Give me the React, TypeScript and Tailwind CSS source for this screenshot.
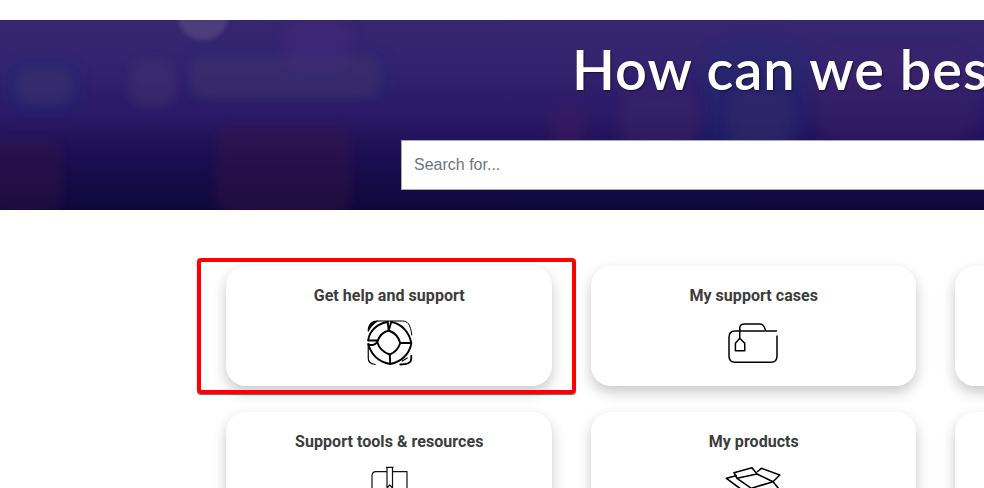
import React from 'react';

const blobs = [
    { x: 178, y: -28, w: 50, h: 48, rx: 24, fill: '#6a5a90', op: 0.45, blur: 2 },
    { x: 8, y: 42, w: 72, h: 50, rx: 16, fill: '#1c2a78', op: 0.4, blur: 6 },
    { x: 16, y: 48, w: 56, h: 36, rx: 14, fill: '#4a3468', op: 0.4, blur: 5 },
    { x: 130, y: 40, w: 46, h: 46, rx: 16, fill: '#47366f', op: 0.4, blur: 5 },
    { x: 186, y: 32, w: 204, h: 50, rx: 18, fill: '#1c2a78', op: 0.25, blur: 6 },
    { x: 190, y: 36, w: 190, h: 42, rx: 16, fill: '#4a3468', op: 0.42, blur: 5 },
    { x: 285, y: 0, w: 65, h: 45, rx: 18, fill: '#552a85', op: 0.35, blur: 7 },
    { x: 215, y: 105, w: 136, h: 90, rx: 18, fill: '#43143f', op: 0.32, blur: 5 },
    { x: -10, y: 118, w: 72, h: 76, rx: 16, fill: '#43143f', op: 0.3, blur: 5 },
    { x: 550, y: 85, w: 36, h: 50, rx: 14, fill: '#551a5c', op: 0.3, blur: 7 },
    { x: 620, y: 70, w: 80, h: 60, rx: 20, fill: '#4a2a68', op: 0.35, blur: 7 },
    { x: 705, y: 25, w: 100, h: 105, rx: 24, fill: '#1c2a70', op: 0.45, blur: 7 },
    { x: 730, y: 70, w: 60, h: 60, rx: 20, fill: '#3f2a68', op: 0.4, blur: 7 },
    { x: 815, y: 30, w: 160, h: 95, rx: 30, fill: '#4a2468', op: 0.3, blur: 7 },
];

const LifeRingIcon = () => (
    <svg viewBox="-1.25 0 60 55" className="h-[55px] w-[60px]" fill="none" stroke="#000" strokeWidth="1.9" strokeLinecap="round" strokeLinejoin="round">
        {/* hole */}
        <path d="M28.500 15.500C34 17.500 38.500 22.500 40 28C38.500 33 34.500 37.500 29.500 39.500C23.500 37.500 18.500 32.500 17 27C18.500 21.500 23 17 28.500 15.500Z" />
        {/* spokes */}
        <path d="M27.500 7Q28 12 28.500 15.500Q29.500 12 31 7M40 28H51M29.500 39.500L30 49M17 25.500L8 25.500" />
        {/* ring */}
        <path d="M8 25C9 16 17 8.500 27.500 7M31 7C41 8.500 49 17 51 28M51 29C49 39 41 47 30 49M30 49C19 47 11 40 8 29C11 31 15 30 17 27" />
        {/* frame corners */}
        <path d="M8 16C8 10 11 6 17 6C13 8.500 10 12 8 16Z" fill="#000" strokeWidth="1.2" />
        <path d="M17 6H42C47 6 50.500 9 51.500 20" strokeWidth="1" />
        <path d="M8 29V43C8 46 10 49 15 49.500" strokeWidth="1.2" />
        <path d="M51 41V44C51 47 48 49.500 40 49.500" strokeWidth="1.8" />
        <path d="M42 46L47 43" strokeWidth="1.2" />
    </svg>
);

const CaseIcon = () => (
    <svg viewBox="0 0 60 55" className="h-[55px] w-[60px]" fill="none" stroke="#000" strokeWidth="1.5" strokeLinecap="round" strokeLinejoin="round">
        <path d="M16.750 15V13C16.750 10.500 18.500 9 21.750 9H37C39.500 9 41.500 11.500 42.400 15" />
        <path d="M53.500 16H12C8 16 6 18.500 6 22.500V41C6 45 8.500 47.300 12 47.300H48C51.500 47.300 54 45 54 41V21" />
        <path d="M16.750 15V23.300L12.400 28.300V35.700H21.750V28.300L16.750 23.300" />
    </svg>
);

const BookIcon = () => (
    <svg viewBox="0 0 60 55" className="h-[55px] w-[60px]" fill="none" stroke="#111" strokeWidth="1.2" strokeLinejoin="round">
        <path d="M28 10.700H17C14.500 10.700 13 12.500 13 15V55M33.500 10.700H48V55" />
        <path d="M27 6.300H34.500M28 6.300V27L30.700 24L33.500 27V6.300" />
    </svg>
);

const BoxIcon = () => (
    <svg viewBox="0 0 60 55" className="h-[55px] w-[60px]" fill="none" stroke="#000" strokeWidth="1.6" strokeLinejoin="round">
        <path d="M11 11.700L29 6.700L34 13L14 17.300ZM34 11L38.400 7.300L56.750 14L50 20.700L34 13" />
        <path d="M14 17.300L28.400 27.300L50 20.700M14 14.500L3.400 17.300L17 27.500M28.400 27.300V40M50 20.700L56 28" />
    </svg>
);

const cards = [
    { title: 'Get help and support', icon: <LifeRingIcon /> },
    { title: 'My support cases', icon: <CaseIcon /> },
    { title: '', icon: null },
    { title: 'Support tools & resources', icon: <BookIcon /> },
    { title: 'My products', icon: <BoxIcon /> },
    { title: '', icon: null },
];

export default function App() {
    return (
        <div className="relative h-[488px] w-[984px] overflow-hidden bg-white font-['Roboto',sans-serif]">
            <div className="h-5" />

            <section className="relative h-[190px] overflow-hidden bg-[linear-gradient(180deg,#35266f_0%,#33246f_22%,#2a1a66_50%,#1a0e52_72%,#0f083c_100%)]">
                <svg className="absolute inset-0 h-full w-full" viewBox="0 0 984 190" preserveAspectRatio="none">
                    <defs>
                        <filter id="soft2" x="-30%" y="-30%" width="160%" height="160%"><feGaussianBlur stdDeviation="2" /></filter>
                        <filter id="soft5" x="-30%" y="-30%" width="160%" height="160%"><feGaussianBlur stdDeviation="5" /></filter>
                        <filter id="soft6" x="-30%" y="-30%" width="160%" height="160%"><feGaussianBlur stdDeviation="6" /></filter>
                        <filter id="soft7" x="-30%" y="-30%" width="160%" height="160%"><feGaussianBlur stdDeviation="7" /></filter>
                    </defs>
                    {blobs.map((b, i) => (
                        <rect key={i} x={b.x} y={b.y} width={b.w} height={b.h} rx={b.rx} fill={b.fill} opacity={b.op} filter={`url(#soft${b.blur})`} />
                    ))}
                </svg>

                <div className="relative flex w-[1384px] flex-col pl-[401px]">
                    <h1 className="mt-[13px] h-[107px] w-[1000px] whitespace-nowrap pl-[171px] font-['Lato',sans-serif] text-[56px] leading-[72px] font-semibold tracking-[0.9px] text-white [text-shadow:1px_1px_2px_rgba(0,0,0,0.5)]">
                        How can we best help you?
                    </h1>
                    <input
                        type="text"
                        placeholder="Search for..."
                        className="h-[50px] w-[800px] border border-[#a8a8b0] bg-white px-3 font-['Liberation_Sans',sans-serif] text-base text-[#333] outline-none placeholder:text-[#6c757d]"
                    />
                </div>
            </section>

            <div className="mt-14 ml-[226px] grid w-[1054px] grid-cols-[repeat(3,325.5px)] gap-x-[39px] gap-y-[26px]">
                {cards.map((card, i) => (
                    <div key={i} className="flex h-[120px] flex-col items-center rounded-[20px] bg-white pt-[20px] shadow-[0_6px_14px_rgba(0,0,0,0.22)]">
                        <h2 className="h-[29px] pl-px text-base leading-[19px] font-bold tracking-[0.05px] text-[#3c3c3c]">{card.title}</h2>
                        {card.icon}
                    </div>
                ))}
            </div>

            {/* red highlight drawn on top of the first card */}
            <div className="pointer-events-none absolute top-[258px] left-[197px] h-[136px] w-[379px] rounded-[4px] border-4 border-[#fe0000] shadow-[0_1px_1px_rgba(0,0,0,0.6)]" />
        </div>
    );
}
